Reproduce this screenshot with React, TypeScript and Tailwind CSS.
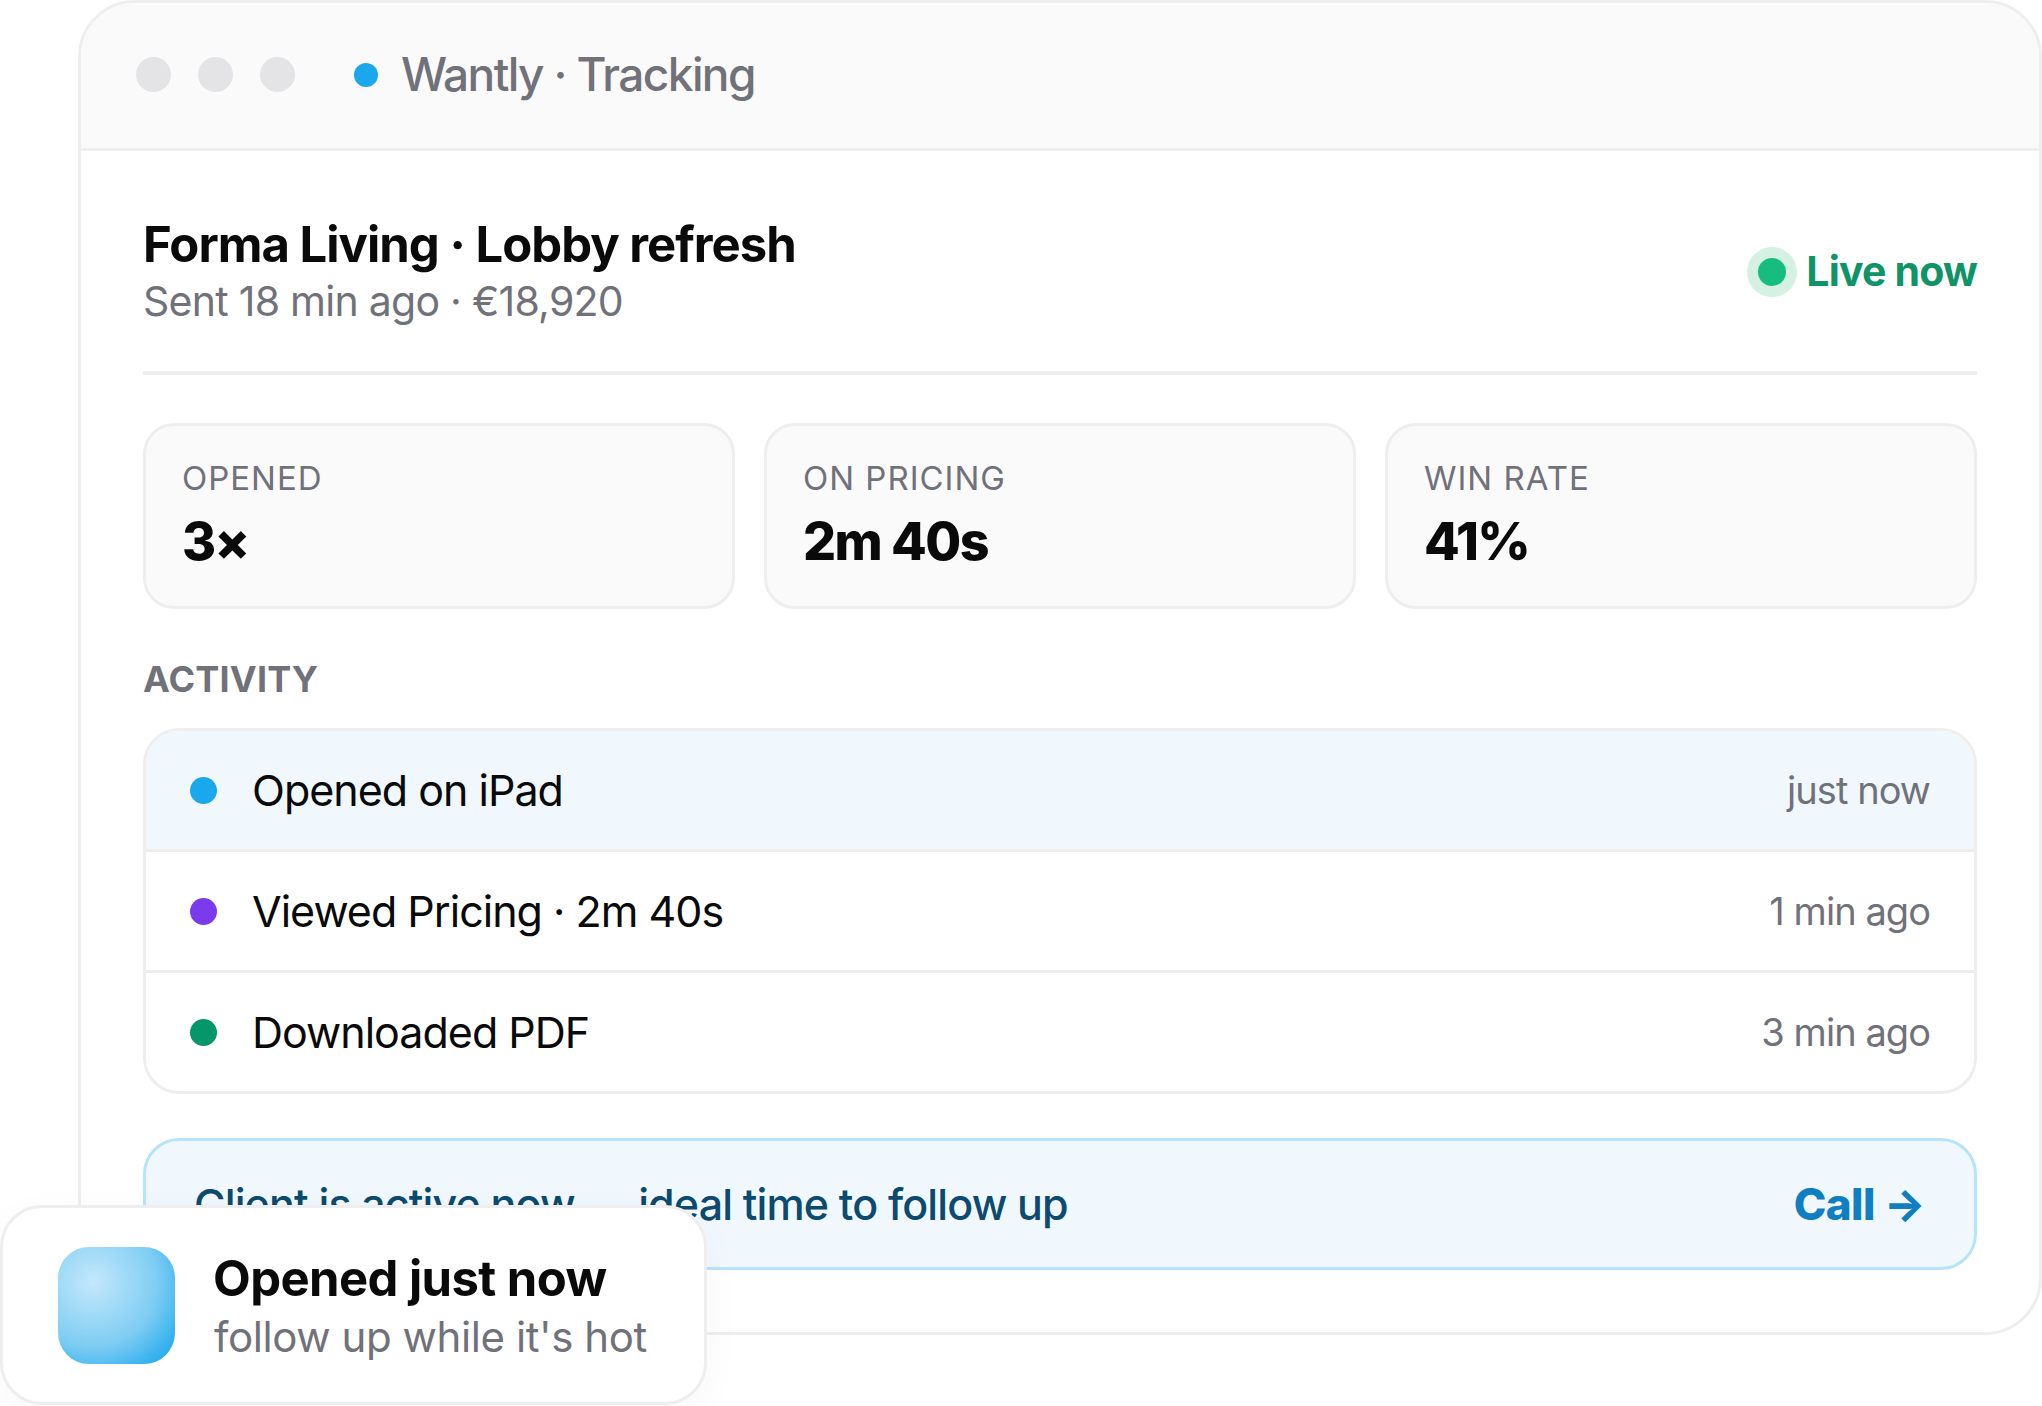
const stats = [
  { label: "OPENED", value: "3×" },
  { label: "ON PRICING", value: "2m 40s" },
  { label: "WIN RATE", value: "41%" },
];

const activity = [
  { text: "Opened on iPad", time: "just now", dot: "bg-[#1aa7ec]", row: "h-[118px] bg-[#f0f8fe]" },
  { text: "Viewed Pricing · 2m 40s", time: "1 min ago", dot: "bg-[#7c3aed]", row: "h-[121px] border-t-[3px] border-[#eeeeee]" },
  { text: "Downloaded PDF", time: "3 min ago", dot: "bg-[#059669]", row: "h-[121px] border-t-[3px] border-[#eeeeee]" },
];

export default function App() {
  return (
    <div className="relative h-[1406px] w-[2042px] overflow-hidden bg-white font-['Inter',sans-serif]">
      <div className="ml-[78px] flex h-[1335px] flex-col overflow-hidden rounded-[57px] border-[3px] border-[#eeeeee] bg-white">
        {/* title bar */}
        <div className="flex h-[148px] shrink-0 items-center border-b-[3px] border-[#eeeeee] bg-[#fafafa] pb-[2px] pl-[55px]">
          <div className="flex gap-[27px]">
            <div className="h-[35px] w-[35px] rounded-full bg-[#e4e4e7]" />
            <div className="h-[35px] w-[35px] rounded-full bg-[#e4e4e7]" />
            <div className="h-[35px] w-[35px] rounded-full bg-[#e4e4e7]" />
          </div>
          <div className="ml-[59px] h-[24px] w-[24px] rounded-full bg-[#1aa7ec]" />
          <div className="ml-[23px] text-[46px] font-medium tracking-[-0.035em] text-[#71717a]">Wantly · Tracking</div>
        </div>

        <div className="flex flex-1 flex-col pt-[65px] pr-[62px] pl-[62px]">
          {/* deal header */}
          <div className="flex items-center justify-between border-b-[4px] border-[#eeeeee] pb-[41px]">
            <div>
              <div className="text-[49px] leading-[57px] font-bold tracking-[-0.02em] text-[#0a0a0a]">Forma Living · Lobby refresh</div>
              <div className="text-[41px] leading-[57px] tracking-[-0.018em] text-[#71717a]">Sent 18 min ago · €18,920</div>
            </div>
            <div className="mb-[2px] flex items-center gap-[9px]">
              <div className="flex h-[50px] w-[50px] items-center justify-center rounded-full bg-[#d4f1e4]">
                <div className="h-[28px] w-[28px] rounded-full bg-[#16bd7e]" />
              </div>
              <div className="text-[41px] font-bold tracking-[-0.02em] text-[#0f9467]">Live now</div>
            </div>
          </div>

          {/* stats */}
          <div className="mt-[48px] grid grid-cols-3 gap-[29px]">
            {stats.map((s) => (
              <div key={s.label} className="h-[186px] rounded-[31px] border-[3px] border-[#eeeeee] bg-[#fafafa] px-[36px] pt-[29px]">
                <div className="text-[33px] leading-[46px] tracking-[0.03em] text-[#71717a]">{s.label}</div>
                <div className="mt-[9px] text-[52px] leading-[64px] font-extrabold tracking-[-0.03em] text-[#0a0a0a]">{s.value}</div>
              </div>
            ))}
          </div>

          <div className="mt-[48px] text-[36px] leading-[44px] font-bold tracking-[0.005em] text-[#71717a]">ACTIVITY</div>

          {/* activity list */}
          <div className="mt-[27px] overflow-hidden rounded-[36px] border-[3px] border-[#eeeeee]">
            {activity.map((a) => (
              <div key={a.text} className={`flex items-center pr-[44px] pl-[44px] ${a.row}`}>
                <div className={`h-[27px] w-[27px] rounded-full ${a.dot}`} />
                <div className="ml-[35px] flex-1 text-[43px] tracking-[-0.023em] text-[#0a0a0a]">{a.text}</div>
                <div className="text-[38px] tracking-[-0.025em] text-[#71717a]">{a.time}</div>
              </div>
            ))}
          </div>

          {/* call to action */}
          <div className="mt-[44px] flex h-[132px] items-center justify-between rounded-[36px] border-[3px] border-[#b8e4fb] bg-[#f0f8fe] pr-[49px] pl-[48px]">
            <div className="text-[43px] font-medium tracking-[-0.02em] text-[#0c4a6e]">Client is active now — ideal time to follow up</div>
            <div className="text-[44px] font-extrabold tracking-[-0.015em] text-[#0f7fc2]">Call →</div>
          </div>
        </div>
      </div>

      {/* toast over the window corner */}
      <div className="absolute top-[1205px] left-0 flex h-[200px] w-[707px] items-center rounded-[42px] border-[3px] border-[#eeeeee] bg-white pl-[55px] shadow-[0_10px_40px_rgba(0,0,0,0.03)]">
        <div className="h-[117px] w-[117px] shrink-0 rounded-[31px] bg-[radial-gradient(circle_at_30%_30%,#c4e8fb,#7fcdf3_55%,#1aa7ec_95%)]" />
        <div className="ml-[38px] pt-[5px]">
          <div className="text-[49px] leading-[58px] font-bold tracking-[-0.012em] text-[#0a0a0a]">Opened just now</div>
          <div className="mt-[1px] pl-[1px] text-[42px] leading-[56px] tracking-[-0.01em] text-[#71717a]">follow up while it's hot</div>
        </div>
      </div>
    </div>
  );
}
